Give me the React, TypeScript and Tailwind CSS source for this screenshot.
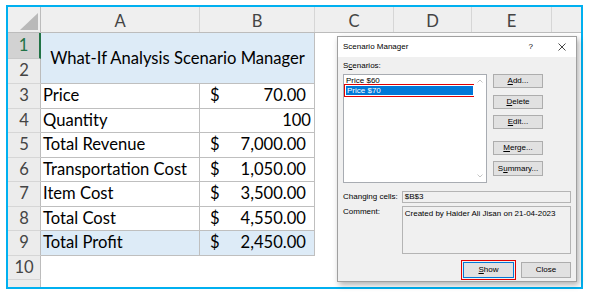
import React from "react";

const rows = [
  { n: "3", label: "Price", cur: true, val: "70.00" },
  { n: "4", label: "Quantity", cur: false, val: "100" },
  { n: "5", label: "Total Revenue", cur: true, val: "7,000.00" },
  { n: "6", label: "Transportation Cost", cur: true, val: "1,050.00" },
  { n: "7", label: "Item Cost", cur: true, val: "3,500.00" },
  { n: "8", label: "Total Cost", cur: true, val: "4,550.00" },
  { n: "9", label: "Total Profit", cur: true, val: "2,450.00", hl: true },
];

function Btn({ children, className = "" }: { children: React.ReactNode; className?: string }) {
  return (
    <div
      className={
        "flex items-center justify-center bg-[#e1e1e1] border border-[#adadad] text-[8px] leading-none text-black " +
        className
      }
    >
      {children}
    </div>
  );
}

export default function App() {
  return (
    <div className="relative w-[589px] h-[295px] bg-white pl-[6px] pt-[5px] overflow-hidden">
      {/* Sheet frame */}
      <div className="w-[577px] h-[284px] border-2 border-[#00b0f0] flex flex-col overflow-hidden bg-white font-['Lato',sans-serif] text-[16.6px] text-black">
        {/* Column headers */}
        <div className="flex h-[26px] shrink-0 bg-[#efefef] border-b border-[#bcbcbc] text-[#444]">
          <div className="w-[33px] shrink-0 border-r border-[#bcbcbc] flex items-end justify-end pr-[2px] pb-[2px]">
            <svg width="18" height="17" viewBox="0 0 18 17">
              <polygon points="18,0 18,17 0,17" fill="#b9b9b9" />
            </svg>
          </div>
          <div className="w-[159px] shrink-0 border-r border-[#d6d6d6] flex items-center justify-center pt-[3px]">A</div>
          <div className="w-[115px] shrink-0 border-r border-[#d6d6d6] flex items-center justify-center pt-[3px]">B</div>
          <div className="w-[79px] shrink-0 border-r border-[#d6d6d6] flex items-center justify-center pt-[3px]">C</div>
          <div className="w-[78px] shrink-0 border-r border-[#d6d6d6] flex items-center justify-center pt-[3px]">D</div>
          <div className="w-[80px] shrink-0 border-r border-[#d6d6d6] flex items-center justify-center pt-[3px]">E</div>
          <div className="flex-1" />
        </div>

        {/* Rows 1-2 with title */}
        <div className="flex h-[51px] shrink-0">
          <div className="w-[33px] shrink-0 flex flex-col text-[#444]">
            <div className="h-[25.5px] bg-[#d2d2d2] border-r-2 border-[#217346] border-b border-b-[#c8c8c8] flex items-center justify-center text-[#217346]">
              1
            </div>
            <div className="h-[25.5px] bg-[#ececec] border-r border-[#bcbcbc] border-b border-b-[#d6d6d6] flex items-center justify-center">
              2
            </div>
          </div>
          <div className="w-[274px] shrink-0 bg-[#ddebf7] border-b border-[#bfbfbf] border-r border-r-[#bfbfbf] flex items-center justify-center text-[16.6px]">
            What-If Analysis Scenario Manager
          </div>
          <div className="flex-1" />
        </div>

        {/* Data rows */}
        {rows.map((r) => (
          <div key={r.n} className="flex h-[24.5px] shrink-0">
            <div className="w-[33px] shrink-0 bg-[#ececec] border-r border-[#bcbcbc] border-b border-b-[#d6d6d6] flex items-center justify-center text-[#444]">
              {r.n}
            </div>
            <div
              className={
                "w-[159px] shrink-0 border-r border-b border-[#bfbfbf] flex items-center pl-[2px] " +
                (r.hl ? "bg-[#ddebf7]" : "bg-white")
              }
            >
              {r.label}
            </div>
            <div
              className={
                "w-[115px] shrink-0 border-r border-b border-[#bfbfbf] flex items-center justify-between " +
                (r.cur ? "pl-[10px] pr-[8px] " : "pl-[10px] pr-[3px] ") +
                (r.hl ? "bg-[#ddebf7]" : "bg-white")
              }
            >
              <span>{r.cur ? "$" : ""}</span>
              <span>{r.val}</span>
            </div>
            <div className="flex-1" />
          </div>
        ))}
        <div className="flex h-[24.5px] shrink-0">
          <div className="w-[33px] shrink-0 bg-[#ececec] border-r border-[#bcbcbc] border-b border-b-[#d6d6d6] flex items-center justify-center text-[#444]">
            10
          </div>
          <div className="flex-1" />
        </div>
        <div className="flex flex-1">
          <div className="w-[33px] shrink-0 bg-[#ececec] border-r border-[#bcbcbc]" />
          <div className="flex-1" />
        </div>
      </div>

      {/* Scenario Manager dialog */}
      <div className="absolute left-[337px] top-[36px] w-[240px] h-[246px] bg-[#f0f0f0] border border-[#a0a0a0] shadow-[2px_3px_6px_rgba(0,0,0,0.3)] flex flex-col font-['Liberation_Sans',sans-serif] text-[8px] leading-none text-black">
        <div className="h-[20px] bg-white flex items-center pl-[5px] pr-[10px] shrink-0">
          <span className="flex-1">Scenario Manager</span>
          <span className="mr-[25px] text-[8px]">?</span>
          <svg width="8" height="8" viewBox="0 0 8 8">
            <path d="M0.5 0.5 L7.5 7.5 M7.5 0.5 L0.5 7.5" stroke="#333" strokeWidth="0.9" />
          </svg>
        </div>
        <div className="flex flex-col px-[5px] pt-[4px]">
          <div className="h-[10px] flex items-center">
            S<span className="underline">c</span>enarios:
          </div>
          <div className="flex mt-[3px]">
            <div className="w-[144px] h-[109px] bg-white border border-[#a8acb2] flex">
              <div className="flex-1 flex flex-col pt-[1px] pl-[1px]">
                <div className="h-[9px] flex items-center pl-[1px]">Price $60</div>
                <div className="h-[9px] mt-[1px] mx-[1px] flex items-center pl-[1px] bg-[#0078d7] text-white outline outline-[1.5px] outline-[#e00000] outline-offset-[1px]">
                  Price $70
                </div>
              </div>
              <div className="w-[12px] flex flex-col items-center justify-between py-[4px] bg-white">
                <svg width="6" height="4" viewBox="0 0 6 4">
                  <path d="M0.5 3.5 L3 1 L5.5 3.5" stroke="#c0c0c0" fill="none" strokeWidth="0.9" />
                </svg>
                <svg width="6" height="4" viewBox="0 0 6 4">
                  <path d="M0.5 0.5 L3 3 L5.5 0.5" stroke="#c0c0c0" fill="none" strokeWidth="0.9" />
                </svg>
              </div>
            </div>
            <div className="flex flex-col ml-[6px]">
              <Btn className="w-[50px] h-[14px]">
                <span className="underline">A</span>dd...
              </Btn>
              <Btn className="w-[50px] h-[14px] mt-[7px]">
                <span className="underline">D</span>elete
              </Btn>
              <Btn className="w-[50px] h-[14px] mt-[6px]">
                <span className="underline">E</span>dit...
              </Btn>
              <Btn className="w-[50px] h-[14px] mt-[12px]">
                <span className="underline">M</span>erge...
              </Btn>
              <Btn className="w-[50px] h-[15px] mt-[6px]">
                S<span className="underline">u</span>mmary...
              </Btn>
            </div>
          </div>
          <div className="flex mt-[8px] items-start">
            <div className="w-[59px] h-[12px] flex items-center">Changing cells:</div>
            <div className="w-[170px] h-[12px] border border-[#b4b4b4] bg-[#f0f0f0] flex items-center pl-[2px]">
              $B$3
            </div>
          </div>
          <div className="flex mt-[3px] items-start">
            <div className="w-[59px] h-[12px] flex items-center">Comment:</div>
            <div className="w-[170px] h-[48px] border border-[#b4b4b4] bg-[#f0f0f0] pl-[2px] pt-[3px]">
              Created by Haider Ali Jisan on 21-04-2023
            </div>
          </div>
          <div className="flex justify-end mt-[8px] pr-[0px]">
            <Btn className="w-[51px] h-[16px] !border-[#0078d7] outline outline-[1.5px] outline-[#e00000] outline-offset-[1px]">
              <span className="underline">S</span>how
            </Btn>
            <Btn className="w-[50px] h-[16px] ml-[7px]">Close</Btn>
          </div>
        </div>
      </div>
    </div>
  );
}
